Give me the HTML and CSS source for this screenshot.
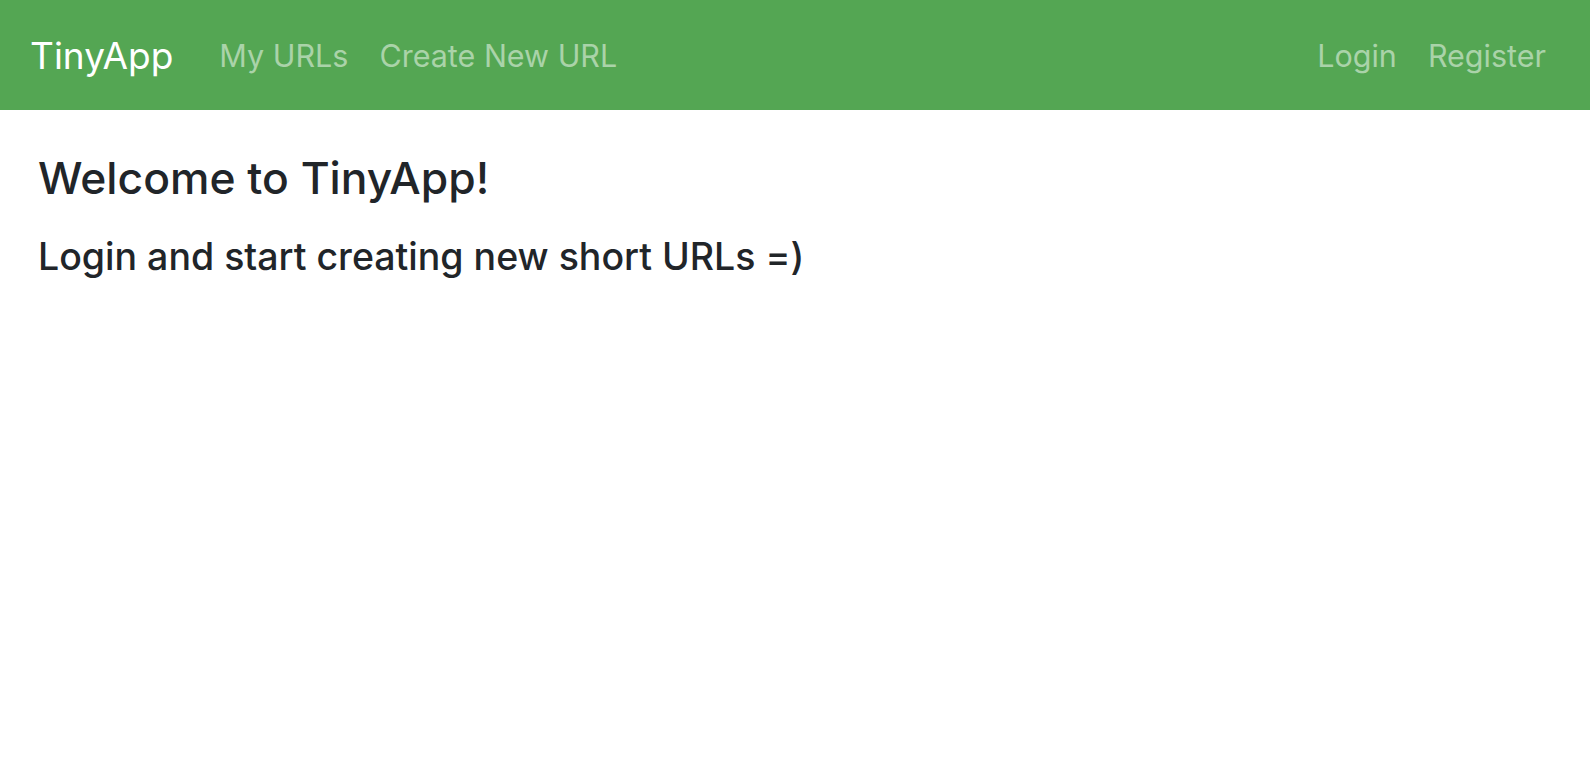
FILE: index.html
```html
<!DOCTYPE html>
<html lang="en">
<head>
<meta charset="utf-8">
<title>TinyApp</title>
<link rel="stylesheet" href="styles.css">
</head>
<body>
<nav class="navbar">
  <a class="brand" href="#">TinyApp</a>
  <ul class="nav-links">
    <li><a class="nav-link" href="#">My URLs</a></li>
    <li><a class="nav-link" href="#">Create New URL</a></li>
  </ul>
  <ul class="nav-links nav-right">
    <li><a class="nav-link" href="#">Login</a></li>
    <li><a class="nav-link" href="#">Register</a></li>
  </ul>
</nav>
<main class="content">
  <h1 class="title">Welcome to TinyApp!</h1>
  <h2 class="subtitle">Login and start creating new short URLs =)</h2>
</main>
</body>
</html>
```
FILE: styles.css
```css
html, body {
  margin: 0;
  padding: 0;
  background: #ffffff;
}
body {
  font-family: "Inter", "Liberation Sans", sans-serif;
  color: #212529;
}
.navbar {
  display: flex;
  align-items: center;
  height: 110px;
  padding: 0 30px 0 30px;
  background: #54a653;
  box-sizing: border-box;
}
.brand {
  font-size: 37px;
  color: #ffffff;
  text-decoration: none;
  margin-right: 46px;
}
.nav-links {
  display: flex;
  gap: 31px;
  list-style: none;
  margin: 0;
  padding: 0;
}
.nav-right {
  margin-left: auto;
  margin-right: 14px;
}
.nav-link {
  font-size: 30.5px;
  color: #aad3a9;
  text-decoration: none;
}
.content {
  padding: 0 38px;
}
.title {
  margin: 42px 0 0;
  font-size: 44.4px;
  font-weight: 500;
  line-height: 1.2;
}
.subtitle {
  margin: 29px 0 0;
  font-size: 37.5px;
  font-weight: 500;
  line-height: 1.2;
}
```
